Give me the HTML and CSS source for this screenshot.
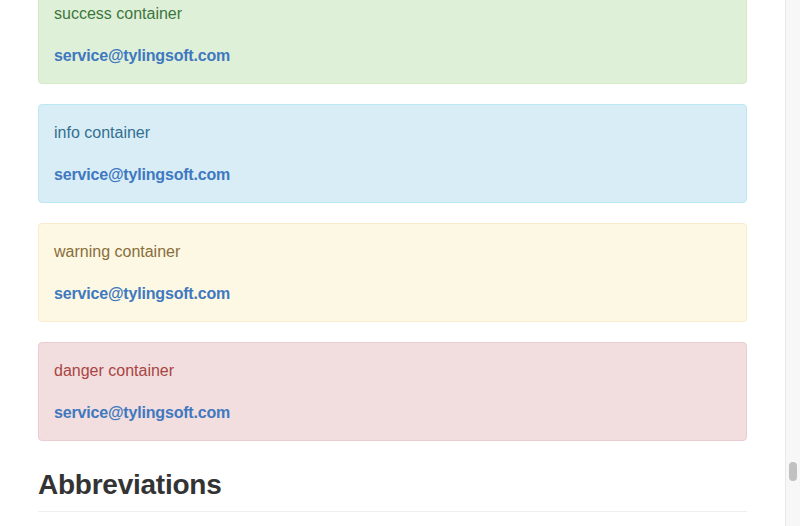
FILE: index.html
```html
<!DOCTYPE html>
<html lang="en">
<head>
<meta charset="utf-8">
<title>Containers</title>
<link rel="stylesheet" href="styles.css">
</head>
<body>
<div class="window">
  <main class="page">
    <div class="content">
      <div class="alert alert-success">
        <p>success container</p>
        <p><a href="#">service@tylingsoft.com</a></p>
      </div>
      <div class="alert alert-info">
        <p>info container</p>
        <p><a href="#">service@tylingsoft.com</a></p>
      </div>
      <div class="alert alert-warning">
        <p>warning container</p>
        <p><a href="#">service@tylingsoft.com</a></p>
      </div>
      <div class="alert alert-danger">
        <p>danger container</p>
        <p><a href="#">service@tylingsoft.com</a></p>
      </div>
      <h2 class="heading">Abbreviations</h2>
    </div>
  </main>
  <div class="scrollbar"><div class="thumb"></div></div>
</div>
</body>
</html>
```
FILE: styles.css
```css
html, body {
  margin: 0;
  padding: 0;
  height: 100%;
  overflow: hidden;
  background: #fff;
}
body {
  font-family: "Liberation Sans", Arial, sans-serif;
  font-size: 16px;
  line-height: 25.5px;
  color: #333;
}
.window {
  display: flex;
  height: 526px;
}
.page {
  flex: 1;
  overflow: hidden;
  padding: 0 38px;
}
.content {
  margin-top: -15px;
}
.alert {
  padding: 15px;
  border: 1px solid transparent;
  border-radius: 4px;
  margin-bottom: 20px;
}
.alert p {
  margin: 0 0 16px;
}
.alert p:last-child {
  margin-bottom: 0;
}
.alert a {
  color: #4078c0;
  font-weight: bold;
  letter-spacing: -0.18px;
  text-decoration: none;
}
.alert-success { color: #3c763d; background: #dff0d8; border-color: #d6e9c6; }
.alert-info { color: #31708f; background: #d9edf7; border-color: #bce8f1; }
.alert-warning { color: #8a6d3b; background: #fcf8e3; border-color: #faebcc; }
.alert-danger { color: #a94442; background: #f2dede; border-color: #ebccd1; }
.heading {
  margin: 27px 0 16px;
  font-size: 28px;
  line-height: 1.2;
  font-weight: bold;
  letter-spacing: -0.25px;
  color: #333;
  padding-bottom: 9px;
  border-bottom: 1px solid #eee;
}
.scrollbar {
  width: 15px;
  flex: none;
  box-sizing: border-box;
  border-left: 1px solid #e8e8e8;
  background: #f7f7f7;
}
.thumb {
  width: 8px;
  height: 19px;
  margin: 462px 0 0 3px;
  border-radius: 4px;
  background: #c1c1c1;
}
```
